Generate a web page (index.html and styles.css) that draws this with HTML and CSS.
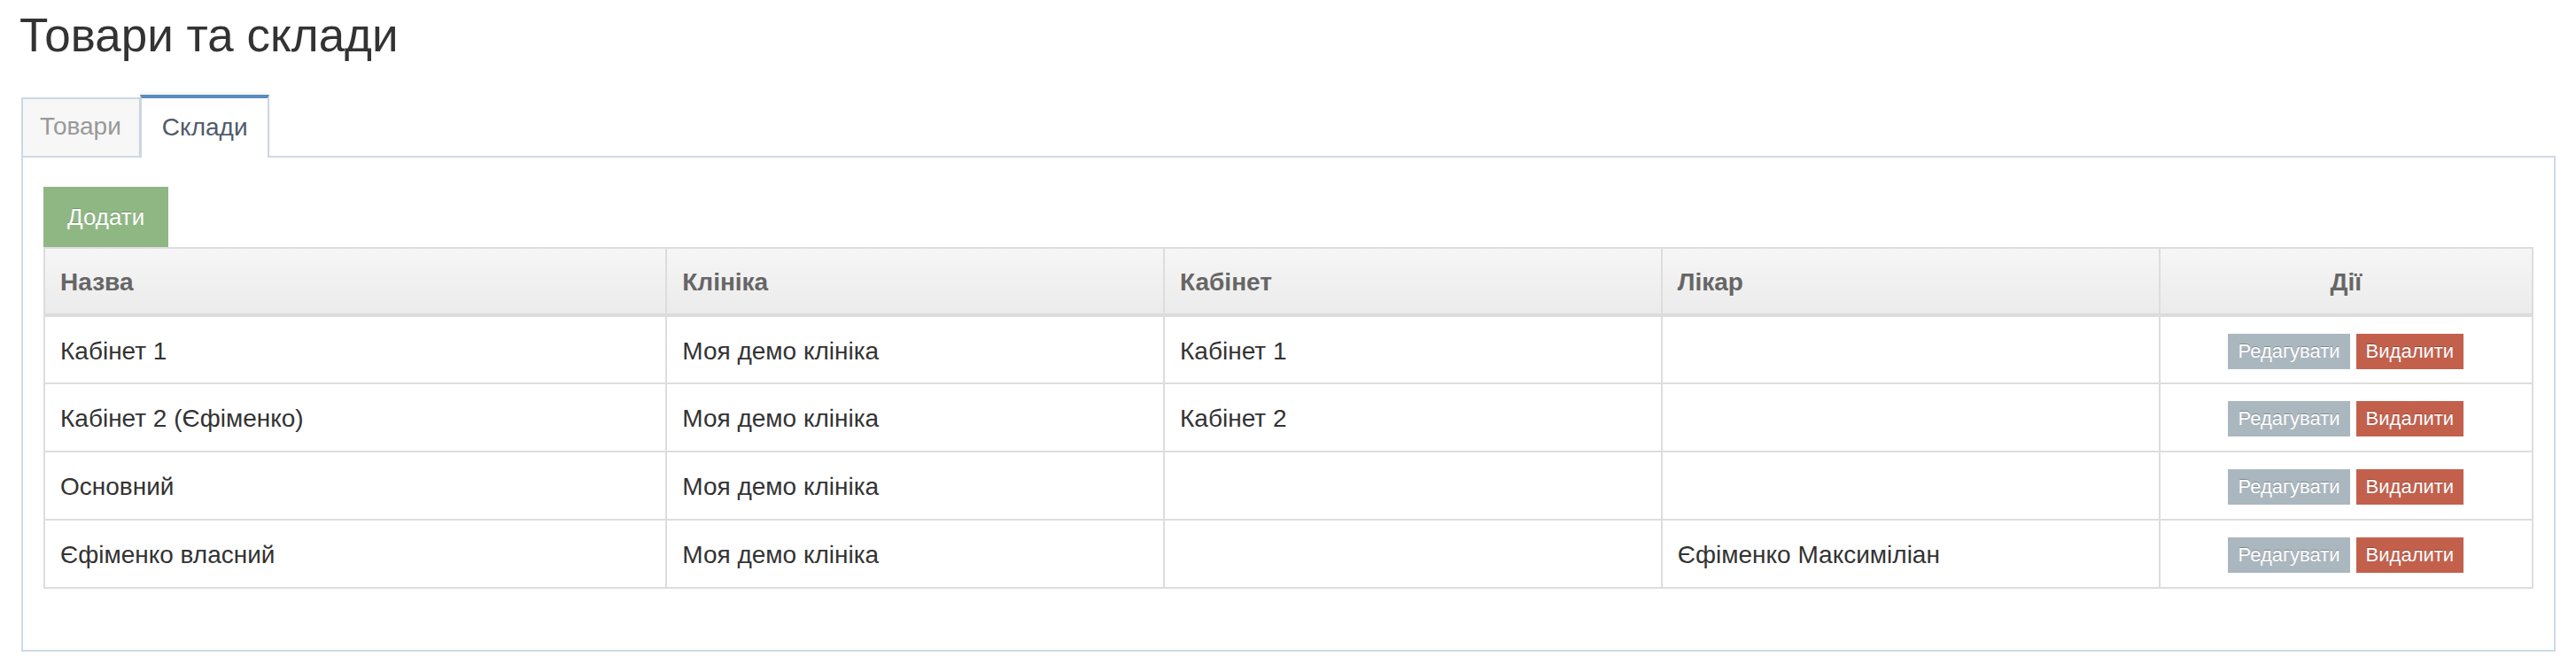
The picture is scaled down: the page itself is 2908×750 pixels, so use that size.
FILE: index.html
```
<!DOCTYPE html>
<html lang="uk">
<head>
<meta charset="utf-8">
<title>Товари та склади</title>
<link rel="stylesheet" href="styles.css">
</head>
<body>
<div class="page">
  <h1 class="title">Товари та склади</h1>
  <div class="tabs">
    <div class="tab">Товари</div>
    <div class="tab tab-active">Склади</div>
  </div>
  <div class="panel">
    <div class="toolbar"><button class="btn-add">Додати</button></div>
    <table class="grid">
      <colgroup>
        <col class="c-name"><col class="c-clinic"><col class="c-room"><col class="c-doctor"><col class="c-actions">
      </colgroup>
      <thead>
        <tr><th>Назва</th><th>Клініка</th><th>Кабінет</th><th>Лікар</th><th class="center">Дії</th></tr>
      </thead>
      <tbody>
        <tr><td>Кабінет 1</td><td>Моя демо клініка</td><td>Кабінет 1</td><td></td><td class="actions"><div class="btns"><span class="btn btn-edit">Редагувати</span><span class="btn btn-del">Видалити</span></div></td></tr>
        <tr><td>Кабінет 2 (Єфіменко)</td><td>Моя демо клініка</td><td>Кабінет 2</td><td></td><td class="actions"><div class="btns"><span class="btn btn-edit">Редагувати</span><span class="btn btn-del">Видалити</span></div></td></tr>
        <tr><td>Основний</td><td>Моя демо клініка</td><td></td><td></td><td class="actions"><div class="btns"><span class="btn btn-edit">Редагувати</span><span class="btn btn-del">Видалити</span></div></td></tr>
        <tr><td>Єфіменко власний</td><td>Моя демо клініка</td><td></td><td>Єфіменко Максиміліан</td><td class="actions"><div class="btns"><span class="btn btn-edit">Редагувати</span><span class="btn btn-del">Видалити</span></div></td></tr>
      </tbody>
    </table>
  </div>
</div>
</body>
</html>
```
FILE: styles.css
```
* { box-sizing: border-box; }
html, body { margin: 0; padding: 0; background: #fff; }
body {
  font-family: "Liberation Sans", Arial, Helvetica, sans-serif;
  color: #333;
  font-size: 28px;
}
.page {
  padding: 0 23px 0 24px;
}
.title {
  margin: 11px 0 0 -2px;
  font-size: 53px;
  line-height: 58px;
  font-weight: normal;
  color: #333;
}
.tabs {
  display: flex;
  align-items: flex-end;
  margin-top: 38px;
}
.tab {
  height: 66px;
  padding: 0 20px 0 19px;
  border: 2px solid #cdd7e3;
  border-bottom: 0;
  background: #f7f7f7;
  color: #999;
  font-size: 28px;
  line-height: 62px;
}
.tab-active {
  position: relative;
  z-index: 1;
  height: 71px;
  margin-bottom: -2px;
  margin-left: -1px;
  padding: 0 22px 0 23px;
  border-top: 4px solid #5b8cbe;
  background: #fff;
  color: #4f5b6b;
  line-height: 66px;
  box-shadow: 0 -2px 4px rgba(0, 0, 0, 0.06);
}
.panel {
  border: 2px solid #cfd9e5;
  padding: 33px 23px 69px 23px;
}
.toolbar { display: flex; }
.btn-add {
  height: 68px;
  padding: 0 27px;
  border: 0;
  background: #8fb784;
  color: #fff;
  font-family: inherit;
  font-size: 26px;
  line-height: 68px;
  text-shadow: 0 -1px 0 rgba(0, 0, 0, 0.2);
}
.grid {
  width: 100%;
  border-collapse: collapse;
  border: 2px solid #dddddd;
  table-layout: fixed;
}
.c-name { width: 25%; }
.c-clinic, .c-room, .c-doctor { width: 20%; }
.c-actions { width: 15%; }
.grid th {
  height: 76px;
  padding: 2px 17px 0 17px;
  text-align: left;
  font-weight: bold;
  color: #666;
  line-height: 32px;
  background: linear-gradient(#f6f6f6, #ebebeb);
  border: 2px solid #dddddd;
  border-bottom: 4px solid #dcdcdc;
}
.grid th.center { text-align: center; }
.grid td {
  height: 77px;
  padding: 3px 17px 0 17px;
  border: 2px solid #dddddd;
  line-height: 32px;
  color: #333;
  vertical-align: middle;
}
.grid td.actions { padding-left: 8px; padding-right: 8px; }
.btns {
  display: flex;
  justify-content: center;
  gap: 7px;
}
.btn {
  display: inline-block;
  height: 40px;
  padding: 0 11px;
  font-size: 22px;
  line-height: 40px;
  color: #fff;
  text-shadow: 0 -1px 0 rgba(0, 0, 0, 0.25);
}
.btn-edit { background: #abb7bf; }
.btn-del { background: #c3604c; }
```
